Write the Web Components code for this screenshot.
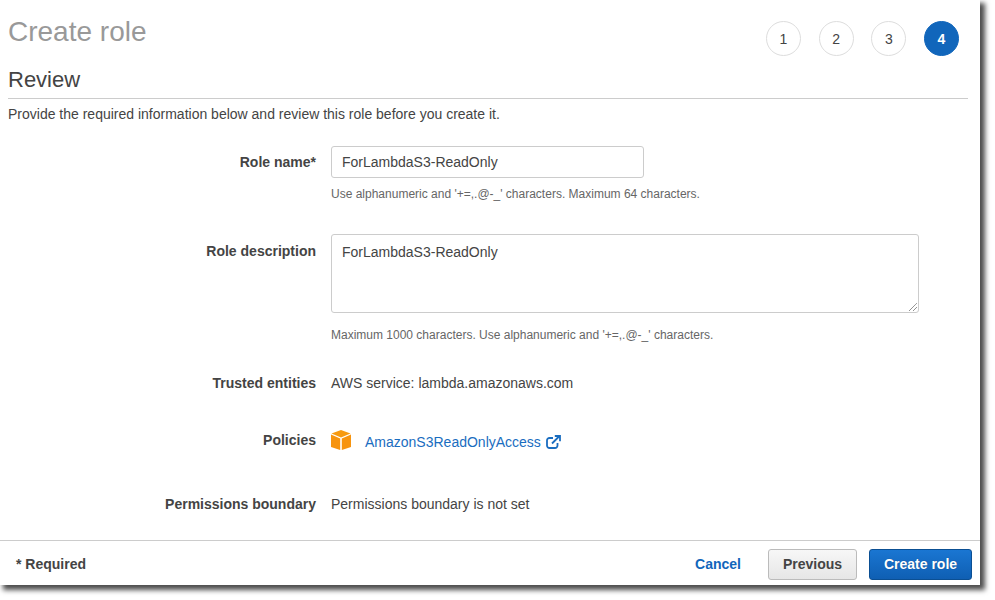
<!DOCTYPE html>
<html lang="en">
<head>
<meta charset="utf-8">
<title>Create role</title>
<style>
html,body{margin:0;padding:0;background:#fff;height:600px;overflow:hidden}
body{font:14px/20px "Liberation Sans",Arial,sans-serif;color:#444}
</style>
</head>
<body>
<role-wizard>
  <wizard-header slot="header" title-text="Create role" step="4" steps="4"></wizard-header>
  <review-section heading="Review">Provide the required information below and review this role before you create it.</review-section>
  <form-row label="Role name*" top="22">
    <text-box>ForLambdaS3-ReadOnly</text-box>
    <help-text>Use alphanumeric and '+=,.@-_' characters. Maximum 64 characters.</help-text>
  </form-row>
  <form-row label="Role description" top="31" label-pad="7">
    <text-box multiline>ForLambdaS3-ReadOnly</text-box>
    <help-text wide>Maximum 1000 characters. Use alphanumeric and '+=,.@-_' characters.</help-text>
  </form-row>
  <form-row label="Trusted entities" top="29">AWS service: lambda.amazonaws.com</form-row>
  <form-row label="Policies" top="37"><policy-link>AmazonS3ReadOnlyAccess</policy-link></form-row>
  <form-row label="Permissions boundary" top="44">Permissions boundary is not set</form-row>
  <wizard-footer slot="footer"></wizard-footer>
</role-wizard>
<script>
function def(name, css, html, init){
  customElements.define(name, class extends HTMLElement{
    connectedCallback(){
      if(this.shadowRoot) return;
      const r=this.attachShadow({mode:'open'});
      r.innerHTML='<style>'+css+'</style>'+(typeof html==='function'?html(this):html);
      if(init) init(this,r);
    }
  });
}
def('role-wizard',
 `:host{display:block;width:980px;height:585px;background:#fff;box-shadow:4px 4px 5px 1px #4d4d4d}
  .w{display:flex;flex-direction:column;height:585px}
  .main{flex:1;min-height:0}`,
 `<div class="w"><div class="main"><slot name="header"></slot><slot></slot></div><slot name="footer"></slot></div>`);

def('wizard-header',
 `:host{display:flex;justify-content:space-between;align-items:flex-start;height:65px;padding:0 21px 0 8px}
  h1{margin:16px 0 0;font:400 28px/32px "Liberation Sans",Arial,sans-serif;color:#999}
  ol{display:flex;gap:17.7px;margin:21px 0 0;padding:0;list-style:none}
  li{width:33px;height:33px;border:1px solid #ddd;border-radius:50%;display:flex;align-items:center;justify-content:center;color:#444;font-size:14px}
  li.on{background:#1166bb;border-color:#1166bb;color:#fff;font-weight:700}`,
 el=>{
  const n=+el.getAttribute('steps'),s=+el.getAttribute('step');let o='';
  for(let i=1;i<=n;i++)o+=`<li class="${i===s?'on':''}">${i}</li>`;
  return `<h1>${el.getAttribute('title-text')}</h1><ol>${o}</ol>`;
 });

def('review-section',
 `:host{display:block;padding:0 12px 0 8px}
  h2{margin:0;height:34px;box-sizing:border-box;border-bottom:1px solid #ccc;font:400 22px/29px "Liberation Sans",Arial,sans-serif;color:#444}
  p{margin:5px 0 0;font-size:14px;line-height:20px;color:#444}`,
 el=>`<h2>${el.getAttribute('heading')}</h2><p><slot></slot></p>`);

def('form-row',
 `:host{display:grid;grid-template-columns:316px 1fr;column-gap:15px}
  .l{text-align:right;font-weight:700;color:#444;line-height:20px}
  .v{min-width:0;color:#444;line-height:20px}`,
 el=>`<div class="l" style="padding-top:${el.getAttribute('label-pad')||(el.querySelector('text-box')?6:0)}px">${el.getAttribute('label')}</div><div class="v"><slot></slot></div>`,
 el=>{ el.style.marginTop=el.getAttribute('top')+'px'; });

def('text-box',
 `:host{display:block;position:relative;box-sizing:border-box;width:313px;height:32px;border:1px solid #ccc;border-radius:3px;padding:5px 10px;color:#444;line-height:20px;background:#fff}
  :host([multiline]){width:588px;height:79px;padding:7px 10px}
  svg{display:none;position:absolute;right:0;bottom:0}
  :host([multiline]) svg{display:block}`,
 `<slot></slot><svg width="10" height="10" viewBox="0 0 10 10"><path d="M1 9 9 1M5 9 9 5" stroke="#666" stroke-width="1" stroke-dasharray="1 .5" fill="none"/></svg>`);

def('help-text',
 `:host{display:block;margin-top:7px;font-size:12px;line-height:18px;color:#666}
  :host([wide]){margin-top:13px}`,
 `<slot></slot>`);

def('policy-link',
 `:host{display:flex;align-items:center;height:20px}
  .cube{margin:0 14px 0 0;flex:none}
  a{color:#1a6dc0;text-decoration:none;display:flex;align-items:center;gap:5px;margin-top:3px}`,
 `<svg class="cube" width="20" height="20" viewBox="0 0 20 20"><path d="M10 0 19.500 3.600 10 7.400 .5 3.600Z" fill="#f79a10"/><path d="M0 4.600 9.200 8.400V20L0 17Z" fill="#f7940f"/><path d="M20 4.600 10.800 8.400V20L20 17Z" fill="#f7940f"/></svg>
  <a href="#"><slot></slot><svg width="15" height="14" viewBox="0 0 15 14" fill="none" stroke="#1a6dc0" stroke-width="1.800"><path d="M11.500 8v2.500A2.500 2.500 0 0 1 9 13H3.500A2.500 2.500 0 0 1 1 10.500V5.500A2.500 2.500 0 0 1 3.500 3H7"/><path d="M6 8.500 13 1.500M8.800 1H14V6.200"/></svg></a>`);

def('wizard-footer',
 `:host{display:flex;align-items:center;height:45px;box-sizing:border-box;border-top:1px solid #ccc;padding:2px 8px 0 16px;font-weight:700;color:#444}
  .req{flex:1}
  a{color:#1166bb;text-decoration:none;margin-right:27px}
  button{font:700 14px/20px "Liberation Sans",Arial,sans-serif;height:31px;border-radius:3px;padding:0;cursor:pointer}
  .sec{width:89px;color:#444;border:1px solid #bbb;background:linear-gradient(#f7f7f7,#e6e6e6);margin-right:12px}
  .pri{width:103px;color:#fff;border:1px solid #0b4f93;background:linear-gradient(#1a76d2,#0f5fb3);text-shadow:0 0 1px rgba(0,0,0,.3)}`,
 `<span class="req">* Required</span><a href="#">Cancel</a><button class="sec">Previous</button><button class="pri">Create role</button>`);
</script>
</body>
</html>
